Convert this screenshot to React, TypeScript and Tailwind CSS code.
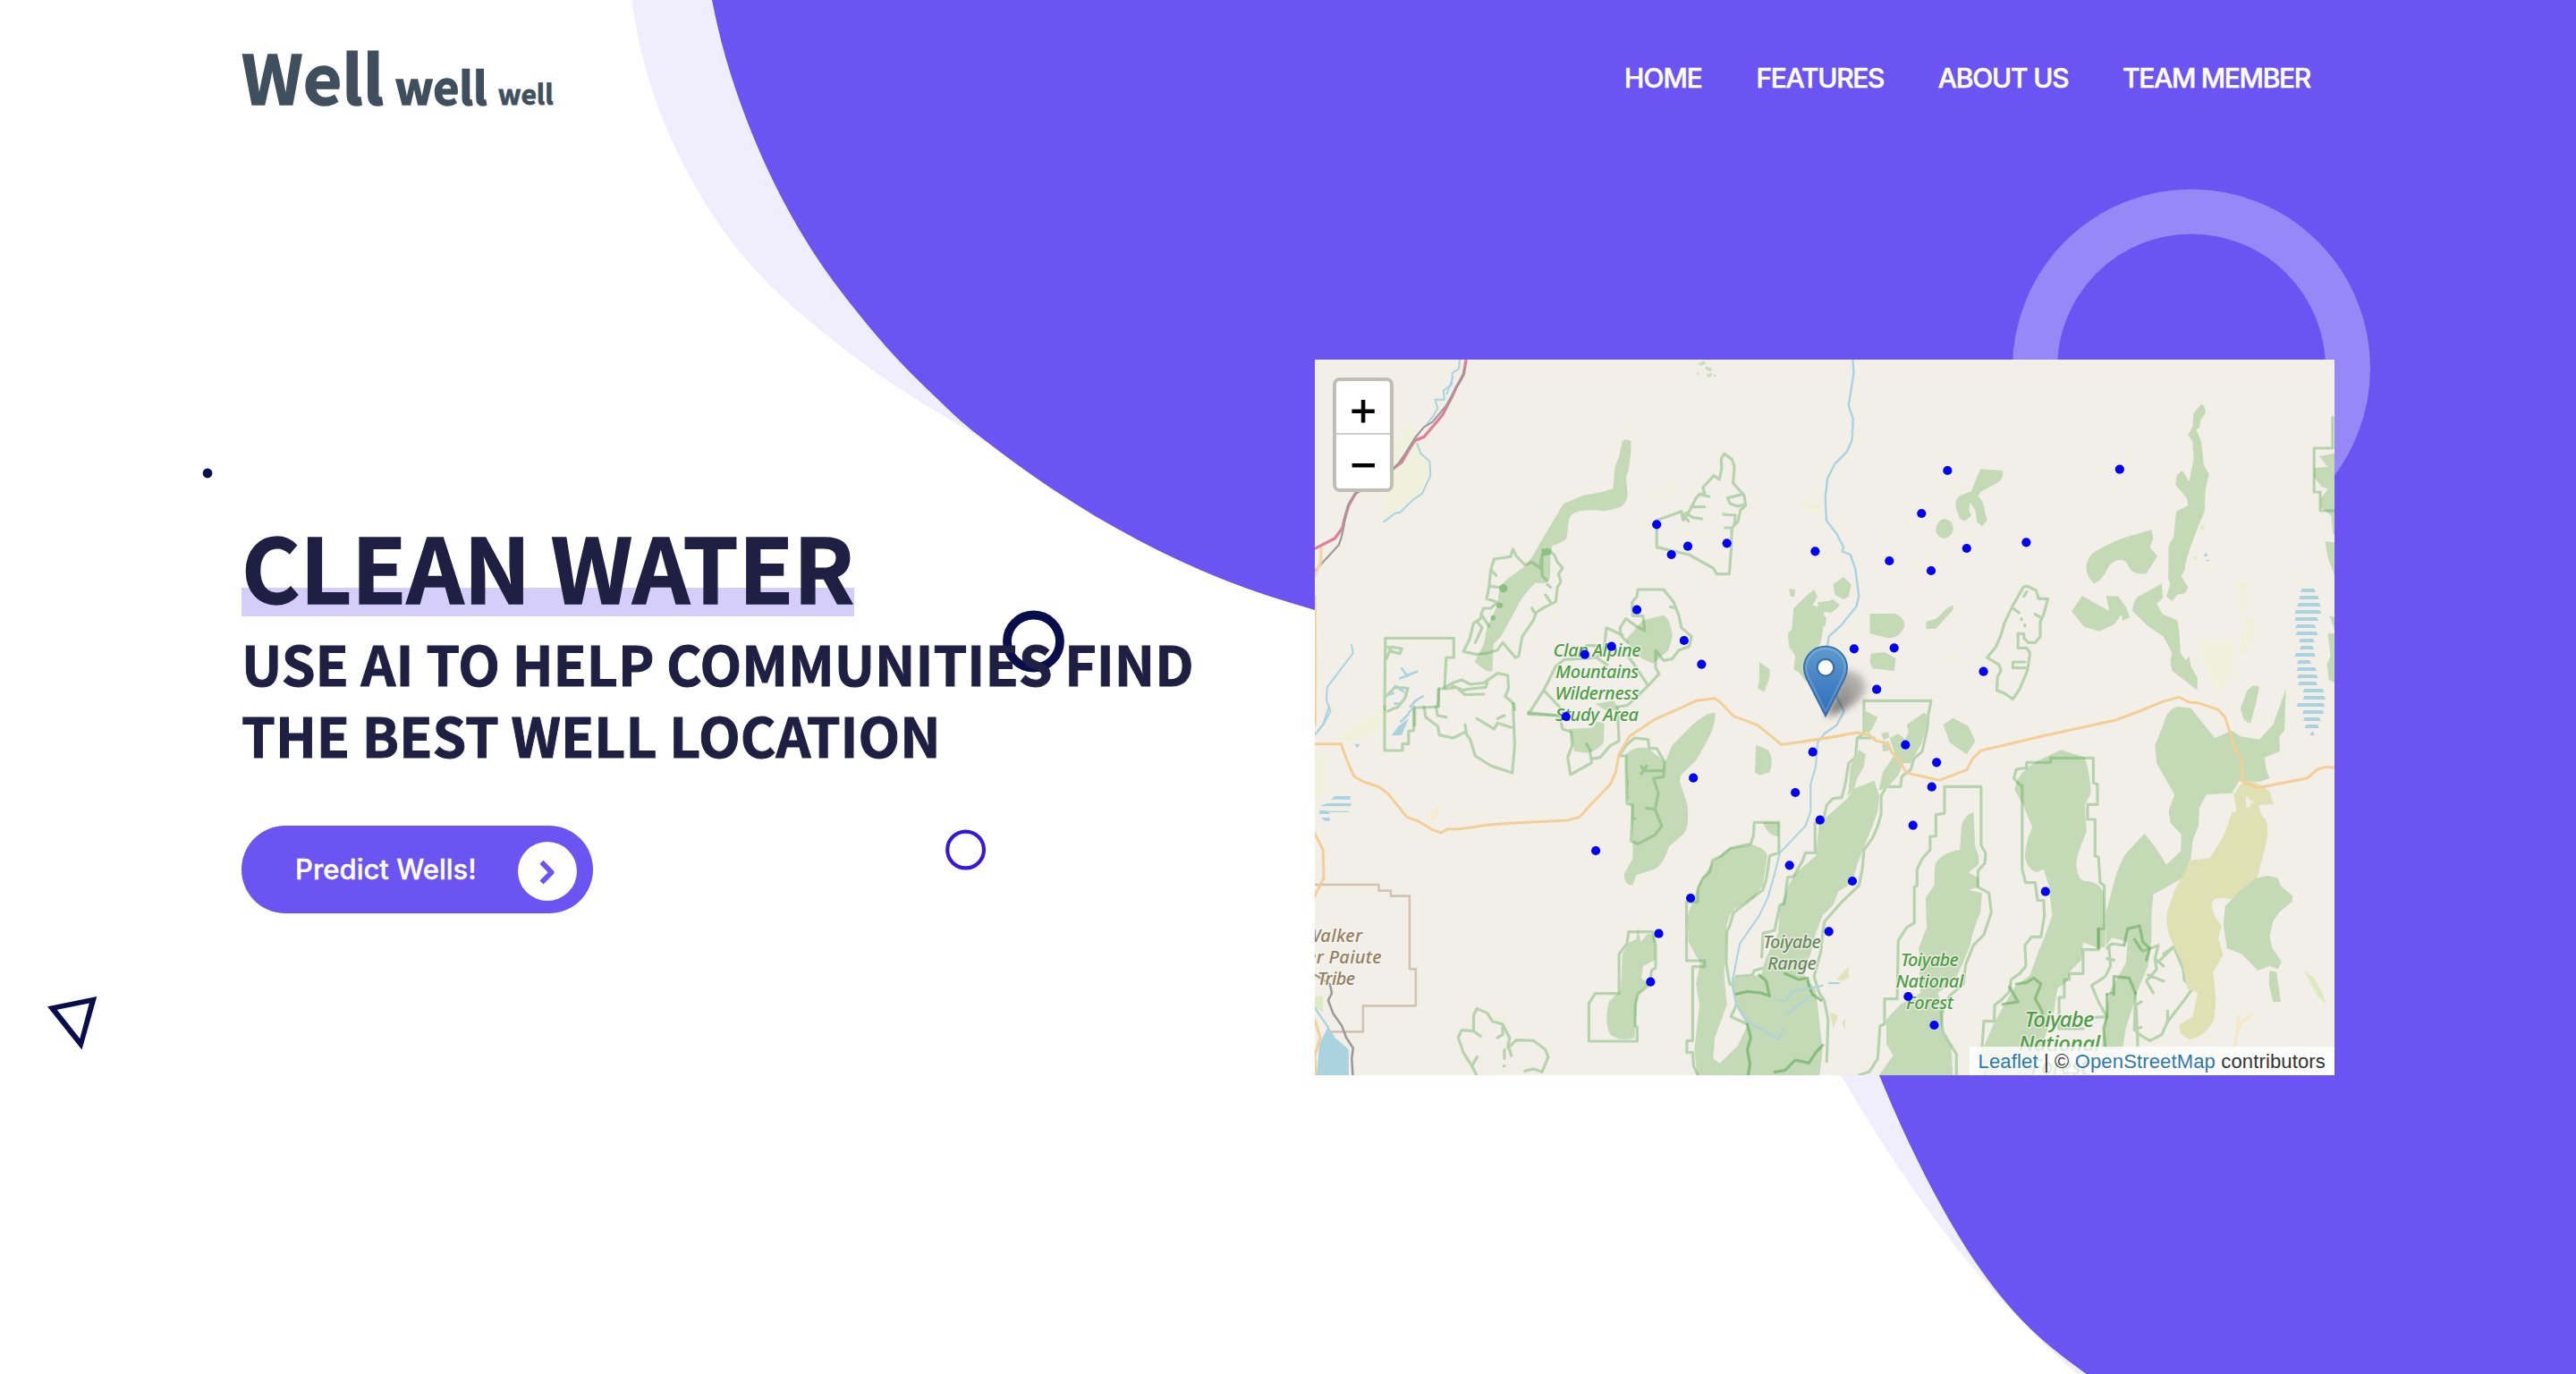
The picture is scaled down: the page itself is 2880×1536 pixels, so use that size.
import React from "react";

type Pt = [number, number];

/* Smooth curve through a list of points (Catmull-Rom as cubic segments). */
function curve(p: Pt[]): string {
  let d = `M${p[0][0]} ${p[0][1]}`;
  for (let i = 0; i < p.length - 1; i++) {
    const a = p[i - 1] || p[i];
    const b = p[i];
    const c = p[i + 1];
    const e = p[i + 2] || c;
    d += ` C${b[0] + (c[0] - a[0]) / 6} ${b[1] + (c[1] - a[1]) / 6} ${c[0] - (e[0] - b[0]) / 6} ${c[1] - (e[1] - b[1]) / 6} ${c[0]} ${c[1]}`;
  }
  return d;
}

const topEdge: Pt[] = [[786, -65], [796, 0], [811.5, 65], [832.5, 128], [858, 189], [888, 247], [922, 301], [960, 351], [1001, 399], [1046, 444], [1093, 486], [1180, 549], [1271, 603], [1368, 648], [1470, 682], [1575, 708]];
const topPale: Pt[] = [[698, -65], [706, 0], [718.5, 64], [738.5, 127], [768, 191], [806, 254], [856, 314], [922, 373], [1002, 432], [1100, 492]];
const lowEdge: Pt[] = [[2070, 1125], [2101, 1202], [2134, 1277], [2172.500, 1352], [2217, 1423], [2269.500, 1485], [2332.500, 1536], [2400, 1580]];
const lowPale: Pt[] = [[2012, 1122], [2058, 1202], [2106, 1280], [2155, 1352], [2204, 1415], [2262, 1478], [2322, 1536], [2385, 1585]];

function Backdrop() {
  return (
    <svg className="absolute inset-0 -z-10" width="2880" height="1536" viewBox="0 0 2880 1536" fill="none">
      <path fill="#F0EEFD" d={curve(topPale) + " L1100 -65 Z"} />
      <path fill="#F0EEFD" d={curve(lowPale) + " V1122 Z"} />
      <path fill="#6B54F1" d={curve(topEdge) + " L2070 1125" + curve(lowEdge).replace(/^M\S+ \S+/, "") + " L2880 1580 V-65 Z"} />
      <circle cx="2450" cy="411.5" r="175" stroke="#9887F6" strokeWidth="50" />
      <circle cx="1155.5" cy="717" r="29.5" stroke="#080E4B" strokeWidth="9.8" />
      <circle cx="1079.6" cy="950" r="20.4" stroke="#3518DC" strokeWidth="4.2" />
      <circle cx="232" cy="529" r="5.4" fill="#080E4B" />
      <path fill="#080E4B" fillRule="evenodd" d="M53 1125.3 L108.3 1114 L91.5 1173.5 Z M63.8 1128.8 L89.3 1161 L99.8 1121.6 Z" />
    </svg>
  );
}

const wood = "#C4D9B6";
const water = "#AAD3DF";
const sand = "#F0F1DC";

/* The map is kept as four sheets; each sheet has its own drawing units. */
const sheets = {
  nw: "translate(-10 -12) scale(.382653 .333333)",
  ne: "translate(570 -12) scale(.382653 .333333)",
  sw: "translate(-10 388) scale(.382653 .333333)",
  se: "translate(570 388) scale(.382653 .333333)",
};
const origin = { nw: [-10, -12], ne: [570, -12], sw: [-10, 388], se: [570, 388] };

const wells: Record<keyof typeof sheets, Pt[]> = {
  nw: [[1025, 589], [1116, 662], [1068, 690], [1230, 652], [1488, 679], [967, 875], [893, 998], [815, 1025], [1105, 978], [1156, 1058], [760, 1233]],
  ne: [[359, 408], [862, 404], [283, 552], [589, 649], [415, 669], [189, 711], [311, 744], [86, 1006], [203, 1003], [152, 1142], [464, 1082]],
  sw: [[1481, 152], [1132, 239], [1430, 288], [1502, 380], [847, 483], [1413, 532], [1124, 642], [1031, 761], [1007, 923], [1528, 754]],
  se: [[236, 128], [327, 187], [313, 269], [258, 398], [81, 585], [645, 620], [244, 972], [320, 1068]],
};

const lake: [number, number, number][] = [
  [810, 1390, 1435], [834, 1385, 1445], [858, 1380, 1450], [882, 1372, 1452], [906, 1372, 1443], [930, 1375, 1436], [954, 1376, 1442],
  [978, 1385, 1432], [1002, 1388, 1430], [1026, 1372, 1435], [1050, 1380, 1422], [1074, 1378, 1438], [1098, 1380, 1442], [1122, 1382, 1440],
  [1146, 1397, 1460], [1170, 1397, 1464], [1194, 1378, 1462], [1218, 1395, 1460], [1242, 1398, 1450], [1266, 1402, 1445], [1290, 1418, 1432],
];

function Fill({ d, c = wood }: { d: string; c?: string }) {
  return <path d={d} fill={c} />;
}
function Line({ d, c = "#5FAA55", w = 3.2, o = 0.4 }: { d: string; c?: string; w?: number; o?: number }) {
  return <path d={d} fill="none" stroke={c} strokeWidth={w} strokeOpacity={o} strokeLinejoin="round" strokeLinecap="round" vectorEffect="non-scaling-stroke" />;
}
function Label({ x, y, t, c, s = 20, w }: { x: number; y: number; t: string; c: string; s?: number; w?: number }) {
  return (
    <text x={x} y={y} fontSize={s} textAnchor="middle" textLength={w} fill={c} stroke="#F6F4EF" strokeOpacity=".7" strokeWidth="3" strokeLinejoin="round" className="font-['Noto_Sans',sans-serif] font-medium italic [paint-order:stroke]">
      {t}
    </text>
  );
}

function Terrain() {
  return (
    <svg className="absolute inset-0" width="1140" height="800" viewBox="0 0 1140 800">
      <rect width="1140" height="800" fill="#F2EFE9" />
      <g transform={sheets.nw}>
        <Fill c={sand} d="M300 245 L330 310 L335 350 L362 390 L355 440 L330 490 L280 530 L228 575 L235 500 L250 380 L262 320 Z M140 1262 L200 1220 L235 1215 L230 1262 Z M1022 478 l18 5 l-3 16 l-15 -3 Z M1058 460 l20 -2 l-3 18 l-14 -2 Z M1450 505 l50 15 l10 35 l-30 -5 l-25 -15 Z M1258 615 l17 10 l-5 25 l-14 -10 Z M72 1205 l28 15 l-10 15 l-18 -5 Z" />
        <Fill d="M925 308 Q940 300 950 310 L949 355 L942 410 L935 430 L940 490 Q935 530 905 535 Q880 548 850 541 Q800 540 785 550 Q770 560 768 575 L762 635 Q750 650 720 660 L715 690 L713 770 L700 785 L670 785 Q630 830 615 870 L570 965 L548 990 L545 1080 Q530 1085 520 1075 L493 1050 L520 990 L530 930 L560 860 L565 800 Q580 775 640 730 L665 690 L700 620 L752 520 L815 490 Q860 485 898 468 L902 400 L915 360 Z" />
        <Fill d="M985 910 L1045 893 Q1065 905 1071 965 L1060 1010 L1015 1055 L985 1040 L960 1020 L935 975 Z M845 1190 L900 1180 L915 1210 L880 1215 Z" />
        <Fill d="M1485 808 L1495 830 L1480 860 L1515 870 L1510 950 L1505 980 L1480 1050 L1460 1115 L1440 1085 L1425 1075 L1430 1030 L1412 1000 L1408 955 L1420 940 L1425 870 L1465 825 Z M1495 850 L1530 845 L1558 855 L1540 880 L1500 878 Z M1412 803 l18 5 l-3 25 l-12 -5 Z M1325 1050 L1355 1075 L1355 1100 L1340 1150 L1320 1140 L1325 1110 Z" />
        <g fill="#CBDDC0"><path d="M1145 50 l18 -12 l5 12 l-15 8 Z M1168 58 l20 8 l-6 10 l-14 -6 Z M1140 78 l10 4 l-4 8 Z M1172 84 l16 -4 l-4 14 l-12 0 Z M1190 84 l10 8 l-8 2 Z" /></g>
        <Line d="M605 672 L598 697 L550 705 L540 740 L535 800 L528 838 L560 850 L540 870 L518 870 L510 905 L490 920 L478 975 L460 1015 L500 1025 L530 1020 L560 1010 L575 985 L612 1035 L622 1030 L632 965 L665 910 L672 885 L695 868 L730 848 L735 800 L745 780 L738 755 L750 735 L735 715 L725 690 L705 672 L690 690 L685 720 L690 740 L660 715 L640 725 L615 695 Z M540 740 L556 760 M535 795 L565 800 M690 690 L690 760 L705 778 M500 915 L515 935 L505 960 L495 985 M512 890 L535 930 M660 870 L672 890 M705 790 L715 800 M700 825 L715 850" />
        <g fill="#8DBF80"><ellipse cx="577" cy="803" rx="12" ry="14" /><ellipse cx="566" cy="860" rx="10" ry="9" /><ellipse cx="547" cy="902" rx="7" ry="9" /><path d="M688 670 L718 672 L714 690 L690 695 Z" /></g>
        <Line d="M1025 575 L1097 545 L1102 575 L1120 545 L1140 500 L1150 488 L1165 485 L1160 465 L1192 425 L1208 438 L1215 400 L1213 370 L1222 352 L1245 370 L1252 395 L1248 450 L1280 490 L1285 525 L1270 540 L1262 580 L1245 600 L1242 680 L1237 755 L1200 755 L1190 735 L1150 710 L1120 690 L1080 680 L1025 665 Z M1102 555 L1118 578 M1110 550 L1130 565 L1157 570 M1125 530 L1165 530 M1150 488 L1178 495 M1275 488 L1232 500 L1240 520 L1262 528 L1280 522 M1220 555 L1255 558 L1252 590 M1225 600 h12" />
        <Line d="M970 807 L1045 807 L1075 850 L1090 895 L1097 935 L1127 965 L1120 998 L1090 1010 L1070 1040 L1045 1045 L1022 1012 L1022 1070 L1032 1090 L1000 1130 L940 1195 L915 1200 M970 807 L967 830 L953 850 L955 895 L985 895 L990 945 L965 930 L935 905 L918 935 L920 960 L940 985 M925 960 L878 935 L872 1000 L850 1035 L755 1042 L730 1065 L695 1145 L650 1225 L740 1230 M1065 865 L1080 870 M695 1145 L740 1200 L760 1233 M940 1030 L960 1060 L1000 1130 M855 1040 L880 1060 M820 995 L850 995" />
        <Line d="M318 1262 L318 1203 L345 1203 L385 1200 L388 1140 L405 1140 L410 1035 L432 1035 L432 970 L232 970 L230 1210 M235 1040 L250 1000 L280 1005 L275 1022 L250 1015 L240 1000 M230 1170 L260 1135 L298 1138 L290 1170 L270 1200 L240 1215" />
        <Line d="M388 1200 V1140 M405 1135 L430 1120 L455 1110 L480 1125 L520 1120 L560 1088 L590 1095 L592 1140 L582 1165 L608 1190 L610 1210 M410 1140 L440 1135 L465 1160 L520 1158 M425 1128 L460 1145 L480 1140 L525 1135 L530 1120" />
        <Line c={water} o={1} w={2} d="M450 36 L447 68 L428 80 L426 120 L402 140 L405 170 L378 170 L385 200 L372 225 L355 250 M430 95 L412 150 M325 318 L335 350 L362 378 L364 425 L340 485 L315 505 L275 548 L260 552 L228 580 M133 992 L138 1020 L105 1070 L62 1135 L60 1180 L72 1215 L50 1262" />
        <Line c={water} o={1} w={2.6} d="M280 1072 L295 1095 L325 1082 M275 1105 L300 1095 M262 1130 L285 1150 M240 1160 L255 1155 M260 1190 h15 M305 1200 L320 1180 L342 1165 M278 1250 L300 1225" />
        <Line c="#E0809A" o={1} w={3.4} d="M468 36 L461 85 L438 132 L425 165 L400 220 L375 255 L345 295 L318 308 L300 340 L280 380 L248 408 L165 470 L145 485 L125 525 L113 570 L107 600 L85 635 L26 670" />
        <Line c="#9B9B9B" o={1} w={2.2} d="M465 60 L458 92 L410 190 L370 245 L345 262 L318 300 L290 352 L270 385 L248 410 L150 475 L125 520 L118 545 L110 600 L103 635 L96 658 L26 745" />
        <Line c="#F5D3A2" o={1} d="M45 670 L43 715 L26 760 M27 830 L28 1100 L26 1262" />
      </g>
      <g transform={sheets.ne}>
        <Fill c={sand} d="M1090 985 L1195 975 L1190 1090 L1150 1175 L1130 1100 Z M1205 780 h30 v60 l-15 50 l-12 -50 Z M1230 900 h30 l-10 80 l-25 50 l-12 -10 Z M1395 785 h20 l5 15 h-25 Z M350 1035 l25 -18 l18 10 l-20 10 Z" />
        <Fill c="#E3EBC4" d="M1100 590 l13 5 l-8 14 l-8 -5 Z M1080 697 h8 v12 h-8 Z" />
        <Fill d="M55 765 L78 790 L70 830 L55 840 L30 825 L25 790 Z M0 850 L25 840 L45 860 L20 885 L-15 880 Z M-12 890 L5 900 L2 930 L-12 925 Z" />
        <Fill d="M455 403 L520 408 Q525 440 500 452 L455 480 L448 495 Q465 510 468 545 L475 575 L460 595 L445 580 L440 540 L425 515 L422 540 L428 560 L410 578 L395 570 L383 530 Q380 500 400 490 L428 478 Z M350 570 Q375 575 376 605 Q370 635 345 635 Q325 630 325 605 Q328 572 350 570 Z" />
        <Fill d="M955 607 L960 635 L950 665 L972 695 L940 753 Q905 760 890 735 Q885 710 865 707 Q840 710 830 730 Q810 780 787 787 Q765 765 764 730 Q770 690 790 680 Q850 640 900 625 Z" />
        <Fill d="M1100 185 Q1115 195 1112 215 L1098 240 L1095 265 L1085 270 L1100 310 L1108 390 L1123 420 L1112 475 L1110 545 L1090 600 L1070 660 L1055 715 L1052 740 L1042 762 L1062 800 L1052 820 L1030 825 L1015 846 L998 830 L1010 790 L1004 770 L1005 660 L1020 630 L1027 545 L1062 525 L1058 500 L1025 455 L1028 425 L1045 408 L1065 445 L1078 370 L1075 310 L1062 290 L1075 260 L1078 215 Z" />
        <Fill d="M985 787 L988 835 L970 855 L988 890 L1030 910 L1035 940 L1040 1020 L1055 1045 L1065 1030 L1070 1065 L1090 1105 L1088 1145 L1050 1110 L1015 1080 L1010 1045 L1015 1020 L990 965 L945 930 L900 880 Q898 850 915 832 Z M752 828 L832 880 L822 828 L858 830 L880 865 L892 900 L870 912 L868 890 L845 925 L803 947 L758 932 L722 880 Z" />
        <Fill d="M132 888 L205 888 Q235 900 233 930 Q220 970 185 970 L132 955 Z M376 860 L375 875 L325 938 L297 940 L296 915 L325 905 L360 868 Z M135 1022 L175 1017 L208 1038 L203 1080 L140 1072 L132 1050 Z M1250 1130 L1270 1132 L1262 1180 L1245 1255 L1225 1245 L1215 1205 L1235 1145 Z" />
        <Fill d="M1490 350 L1445 360 L1470 395 L1430 400 L1430 430 L1450 460 L1470 470 L1450 500 L1450 530 L1480 560 L1485 620 L1490 620 Z M1462 645 L1490 650 L1490 760 L1470 700 Z M1475 895 L1490 900 V945 Z M1470 955 H1490 V1120 L1473 1110 L1468 1060 L1478 1030 Z" />
        <Line d="M1484 230 L1484 333 L1430 333 L1430 480 L1448 480 L1448 543 L1490 543" />
        <Line d="M590 795 L618 810 L625 838 L652 838 L640 890 L630 915 L630 965 L615 985 L595 985 L582 970 L582 955 L565 955 L565 1003 L590 1003 L600 1020 L595 1060 L592 1080 L570 1140 L550 1175 L525 1155 L503 1145 L505 1100 L515 1080 L510 1060 L475 1035 L500 1000 L515 960 L525 920 L550 860 L580 800 Z M550 870 L568 885 M585 1070 L550 1070 V1050 H585 M582 830 L590 815 M615 890 L630 900 M575 905 v4 M585 925 v4" />
        <Line c={water} o={1} w={2.4} d="M82 36 L85 80 L70 190 L83 235 L80 305 L65 345 L30 385 L8 435 L2 500 L5 575 L35 620 L55 665 L52 680 L75 690 L90 740 L100 830 L92 865 L50 925 L12 965 L8 1000 L38 1175 L55 1210 L55 1220 L35 1262 L0 1290" />
        <g fill={water}>
          {lake.map(([y, a, b]) => (
            <path key={y} d={`M${a + 5} ${y - 6} H${b - 5} L${b} ${y + 6} H${a} Z`} />
          ))}
          <path d="M1105 695 l10 -12 l5 12 Z M1112 708 h12 l-4 6 Z" />
        </g>
      </g>
      <g transform={sheets.sw}>
        <Fill c={sand} d="M75 105 L160 50 L230 0 L215 80 L120 125 Z M26 140 L60 180 L65 270 L26 330 Z M545 1035 h42 v22 h-35 Z" />
        <Fill c="#F6EBD2" d="M398 330 L378 380 L362 382 L365 350 Z" />
        <Fill d="M935 160 Q960 130 1000 140 L1050 185 L1070 130 L1130 60 Q1170 20 1195 20 Q1200 60 1165 130 L1140 180 L1095 230 L1092 250 L1115 330 Q1120 400 1105 425 L1060 470 Q1050 520 1020 545 L965 565 L955 598 Q930 600 930 560 L955 510 L955 460 L950 330 L938 310 Z M1315 128 L1350 145 Q1370 180 1355 220 L1325 230 L1312 220 Z" />
        <Fill d="M1235 475 L1300 462 Q1345 475 1348 500 L1335 600 L1310 640 L1250 680 Q1225 720 1228 760 L1222 900 L1230 1000 L1195 1110 L1190 1180 L1210 1197 L1240 1250 L1145 1250 L1135 1150 L1150 1000 L1140 930 L1152 860 L1118 790 L1115 700 L1135 640 L1150 590 L1190 520 Z M1335 388 H1382 V435 Q1350 435 1335 388 Z" />
        <Fill d="M970 743 L978 790 L1000 760 L1020 770 L1020 850 L985 870 L980 910 L1000 930 L970 965 L965 1040 L960 1110 Q920 1125 890 1100 Q870 1060 885 990 L920 950 L925 830 L945 790 L965 780 Z M770 75 L840 70 L850 50 L872 55 L870 120 Q850 150 820 155 L785 150 Z" />
        <Line d="M915 165 H935 L938 325 L955 330 L950 450 L970 460 L1020 430 L1040 400 L1020 345 L1030 290 L1015 240 L1045 235 L1048 185 L1025 140 L1003 140 L1000 110 L960 105 L935 130 Z M980 200 L990 215 L1045 215 M995 200 L980 225 M995 340 L1022 345 M938 240 v30 M955 375 h6" />
        <Line d="M943 755 H1012 L1022 800 L1022 875 L1010 885 L1005 930 L970 965 L962 1000 L962 1070 L968 1075 V1122 H827 V995 L845 962 H915 V830 L938 795 Z" />
        <Line d="M1350 840 L1340 875 L1310 885 L1305 900 L1258 905 L1250 935 L1238 930 L1228 860 L1230 755 L1238 735 L1250 690 L1295 650 L1335 615 L1345 580 L1355 500 L1382 490 V388 H1310 L1308 430 L1300 460 L1240 475 L1215 500 L1188 515 L1180 555 L1160 575 L1145 610 V655 H1112 V852 H1165 V872 H1130 V1120 H1113 V1160 H1130 L1133 1205 L1150 1250 M1250 935 L1258 1000 L1242 1040 L1290 1065" />
        <Line d="M650 20 L740 30 L750 75 L775 85 L778 130 L765 170 L773 228 L835 188 L830 150 M820 125 L832 150 M835 175 L860 170 L890 130 L915 115 L910 0" />
        <Line d="M345 0 L350 35 L385 65 L390 95 L430 105 L465 85 L480 110 L495 165 L540 198 L603 222 L610 130 L605 -10 M465 60 L470 95 M500 40 L550 75 L560 55 L600 70 M560 40 L580 30 M380 0 L385 30 L410 35 M230 0 V147 H282 V125 H300 V82 L315 80 V0" />
        <Line d="M500 1012 L530 1028 L545 1055 L575 1065 L595 1110 L590 1145 L615 1118 L665 1120 L700 1150 L708 1175 L690 1225 L665 1215 L640 1222 M500 1012 L490 1035 V1088 L455 1085 L445 1110 L460 1160 L485 1205 L505 1250 M490 1088 L510 1105 M485 1205 L500 1175 M575 1065 L575 1100 L560 1110 M590 1130 L600 1170 M580 1150 L580 1180 M578 1205 h2" />
        <Line c="#CDBFAD" o={0.9} w={2.6} d="M26 597 H213 V617 H248 V635 H303 V880 H321 V1003 H167 V1090 H75" />
        <Fill c={water} d="M65 1072 L85 1110 L125 1150 L125 1250 H30 L40 1130 Z M300 40 L280 95 L250 97 L270 65 Z M85 300 H130 V311 H72 Z M62 324 H132 V334 H40 Z M70 350 H125 V354 H66 L70 360 H40 V347 Z M45 372 H70 V383 H55 Z M142 125 h16 l-8 14 Z" />
        <Fill c="#DCEBC0" d="M26 972 H50 V1025 L26 1008 Z" />
        <Line c={water} o={1} w={2.2} d="M68 0 L50 60 L26 95 M300 20 L312 5 M26 1010 L65 1075" />
        <Line c="#9B9B9B" o={1} w={2.6} d="M28 900 L70 930 L76 960 L65 985 L80 1030 L105 1070 L118 1110 L138 1145 L134 1180 L138 1250" />
        <Line c="#F3CF97" o={1} w={3} d="M26 125 L103 125 L120 180 L140 233 L165 250 L215 270 L240 292 L295 370 L330 385 L370 413 L395 423 L415 410 L450 410 L530 397 L610 390 L700 385 L760 382 L800 370 L835 325 L890 260 L905 220 L915 160 L945 100 L1020 42 L1100 2 L1140 -20 L1195 -28 L1215 -10 L1250 32 L1320 62 L1390 127 L1450 118 L1568 97 M26 0 V50 M26 425 L50 480 L52 575 L26 635 M26 1050 L42 1110 L26 1170 L30 1250" />
      </g>
      <g transform={sheets.se}>
        <Fill d="M-16 390 L0 375 L65 310 L85 275 L145 248 L160 300 L155 350 L140 400 L115 470 L95 530 L80 590 L40 620 L25 665 L-6 700 L-26 760 L-41 830 L-66 890 L-26 950 L-16 1050 L-6 1150 L-16 1250 L-350 1250 L-306 1195 L-256 1140 L-226 1070 L-261 1000 L-266 910 L-186 900 L-166 830 L-136 760 L-131 680 L-106 600 L-86 560 L-26 500 Z" />
        <Line d="M115 -20 V90 L95 105 L90 170 L70 190 L60 260 L50 305 L24 308 L6 330 L-6 390 L-28 390 V490 H-56 L-66 520 L-91 570 L-108 572 L-118 660 L-131 665 L-146 750 L-180 760 L-184 840 M115 -20 H311 L303 25 L300 70 L285 150 L260 175 L252 210 L225 235 L222 268 H180 L165 300 L165 360 L155 400 L140 440 L115 480 L110 545 L100 600 L50 655 L0 720 L-6 760 L-11 820 L-31 905 L-16 960 L-1 985 L10 1050 L6 1190 M95 105 L145 105" />
        <Line o={0.6} d="M-226 1065 L-216 1110 L-226 1150 L-218 1200 L-226 1250 M-261 965 L-226 955 L-186 960 L-161 970 L-171 920 L-191 900 M-146 1225 L-116 1220 L-86 1185 L-46 1195 L-26 1160 L-6 1135 M-116 895 L-76 915 L-50 910 L-46 935 L-36 965 L-10 985" />
        <Fill d="M115 12 L155 35 L145 60 L130 90 L115 80 Z M100 145 L120 160 L115 200 L95 240 L85 280 L65 300 L70 280 L75 200 Z M240 60 L290 20 L302 30 L298 70 L280 130 L250 190 L230 190 L215 230 L180 275 L158 280 L170 220 L205 160 L200 140 L190 105 L215 90 L235 110 L245 85 Z M165 90 l20 -5 l5 18 l-18 8 Z M168 125 l22 -3 v25 l-20 3 Z M375 38 L420 65 L440 115 L415 160 L365 120 L347 60 Z" />
        <Fill d="M435 355 L440 470 L450 500 L450 530 L420 555 L450 575 L450 605 L420 615 L460 625 L455 690 Q430 760 425 800 L400 870 L380 920 L330 960 L350 1020 L340 1090 L370 1140 L375 1250 H150 L200 1170 L180 1130 L180 1050 L220 1000 L280 960 L275 810 L298 740 L295 640 L320 600 L322 530 Q340 490 395 480 L400 400 Q410 360 435 355 Z" />
        <Line d="M350 268 H457 V465 L470 490 L468 525 L448 550 V605 L480 625 L487 690 L465 765 L435 800 L412 865 L405 930 L365 970 L340 1025 L345 1090 L385 1165 V1250 M350 268 V358 L325 362 V435 H308 V480 L285 510 L270 545 V600 L262 605 V725 L240 740 L215 785 L212 980 H175 V1065 L162 1070 L155 1180 L130 1225 L100 1235" />
        <Fill d="M690 145 L760 170 Q775 220 778 290 L760 330 L765 420 Q735 500 735 530 Q740 590 770 585 Q800 590 815 620 L820 740 L820 805 L800 810 L755 790 L750 850 L715 890 L710 920 L680 945 L670 1020 L640 1120 L610 1250 L470 1250 L465 1140 L495 1060 L555 940 L600 900 L625 820 L640 780 L665 700 L655 600 L640 545 L620 555 Q590 545 585 500 Q590 440 607 405 L580 330 L555 280 Q560 220 625 180 Z" />
        <Fill d="M1035 0 L1070 5 L1140 105 L1190 80 L1215 100 L1270 110 L1310 60 L1348 -60 L1343 80 L1328 100 L1330 150 L1285 170 L1290 210 L1300 240 L1270 252 L1210 250 L1190 290 L1115 295 L1095 340 L1092 400 L1075 450 L1070 510 L1045 575 L960 630 L955 700 L955 780 L945 870 L915 950 L880 1080 L870 1150 H810 L820 1040 L835 950 L880 860 L885 790 L840 775 L822 800 L822 690 L850 570 Q870 500 890 480 L935 425 Q980 490 998 530 L1040 485 L1043 430 L1010 390 L1005 350 L1022 295 L970 190 L965 130 L990 60 Q1000 5 1035 0 Z M1215 5 L1230 -10 L1250 0 L1245 50 L1235 55 Z" />
        <Line d="M660 172 H785 V255 L797 260 V328 H768 V378 H790 V500 L800 505 L805 590 L817 600 V745 H800 V815 H755 V895 H715 V915 H700 V975 H685 V1080 H755 M660 172 V187 H590 V205 L560 210 L553 240 L570 262 L577 265 V545 L587 590 H615 L622 650 H640 L642 700 L632 772 H605 L585 800 L588 870 L570 895 L545 915 L540 955 L515 985 L497 1000 L495 1055 H465 L460 1140 L470 1250" />
        <Line o={0.55} d="M560 930 L590 925 L610 910 L632 930 L615 980 L635 1020 L640 1070 M540 940 L565 990 L520 998 M875 800 L885 745 L920 735 L930 790 L950 810 L940 850 M905 780 L925 815 M845 965 V905 L890 910 L908 960 M825 965 V1040 L815 1080 L820 1140 M800 810 V745" />
        <Line d="M930 820 L975 800 L965 845 L990 870 M1020 805 L980 850 M990 830 L1020 805 L1048 880 L1050 915 L1075 945 L1050 985 L1000 1060 L985 1100 L950 1120 L920 1100 L905 1080 L908 960 M840 960 L825 965 M830 800 L835 870 L820 905 L780 935 L800 990 L825 1040 L790 1042 M825 845 L845 850 M965 845 L970 880 L940 920 L960 960 M945 900 L990 920 M925 990 L910 1000 L915 1140 M870 800 L840 795 L825 810 M1002 1020 V1060 M905 1085 L925 1075" />
        <Fill c="#DFE1B5" d="M1240 247 L1275 262 L1300 285 L1312 328 L1270 330 Q1268 355 1290 380 Q1300 420 1285 480 L1265 570 L1190 645 L1135 650 Q1130 690 1160 735 L1150 780 L1165 830 L1135 890 L1143 980 L1138 1050 Q1110 1110 1065 1115 Q1030 1100 1038 1065 L1075 1040 L1090 960 L1060 945 L1045 860 L1020 800 Q995 750 1000 690 L1025 610 L1070 515 L1125 508 Q1160 450 1170 420 L1190 355 L1203 350 L1195 295 L1215 260 Z" />
        <Fill c="#F2EFE9" d="M1190 647 Q1125 628 1132 670 Q1134 700 1160 735 L1175 690 Z" />
        <Fill c="#EEEFD8" d="M1230 300 h8 v8 h6 v8 h10 v8 h-10 v14 h-12 Z" />
        <Fill d="M1295 567 L1325 575 L1332 600 L1368 635 L1365 655 L1328 690 L1310 720 L1300 770 L1308 810 L1335 855 L1325 880 L1300 870 L1265 885 L1220 830 L1175 810 L1165 730 L1170 670 L1210 620 L1260 575 Z M1300 885 L1320 890 L1333 990 L1310 990 L1298 930 Z" />
        <Fill c="#DAEBC0" d="M1400 885 L1430 910 L1450 950 L1467 1000 L1440 970 Z" />
        <Fill c="#DFE3BE" d="M70 870 V910 L50 920 L35 915 Z M15 1025 L40 1035 L25 1080 L20 1050 Z M60 1045 V1085 L50 1060 Z" />
        <Line c={water} o={1} w={2} d="M-141 985 L-111 985 L-96 955 L-46 945 L-6 935 M-106 1030 L-46 970 M12 927 H42 M0 90 L-21 120 L-26 200 L-41 260 L-41 350 L-56 400 L-131 490 L-146 560 L-166 640 L-191 700 L-248 795 L-271 930 L-258 1000 L-226 1055 L-136 1115 L-121 1080" />
        <Line c="#F3CF97" o={1} w={3} d="M-66 118 L52 95 L95 87 L130 95 L150 115 L185 122 L195 150 L220 185 L240 222 L335 247 L415 212 L432 175 L455 148 L650 95 L850 45 L920 15 L990 -18 L1035 -32 L1065 -15 L1090 -13 L1150 10 L1170 35 L1185 90 L1195 130 L1220 185 L1220 250 L1265 272 L1410 240 L1440 210 L1465 202 L1490 205" />
        <Line c="#F6E7C6" o={1} d="M1198 1140 L1205 1090 L1215 1060 L1243 1037 M1205 1090 L1210 1040" />
      </g>

      <Label x={315.6} y={332} t="Clan Alpine" c="#4F9D48" w={98} />
      <Label x={315.6} y={356} t="Mountains" c="#4F9D48" w={93} />
      <Label x={315.6} y={380} t="Wilderness" c="#4F9D48" w={94} />
      <Label x={315.6} y={403.5} t="Study Area" c="#4F9D48" w={93} />
      <Label x={21} y={651} t="Walker" c="#93805F" w={64} />
      <Label x={19} y={675} t="River Paiute" c="#93805F" w={111} />
      <Label x={24} y={699} t="Tribe" c="#93805F" w={42} />
      <Label x={533.4} y={657.5} t="Toiyabe" c="#6C8A60" w={65} />
      <Label x={533.4} y={681.5} t="Range" c="#6C8A60" w={55} />
      <Label x={687.4} y={677.5} t="Toiyabe" c="#4F9D48" w={65} />
      <Label x={687.4} y={701.5} t="National" c="#4F9D48" w={76} />
      <Label x={687.4} y={725.5} t="Forest" c="#4F9D48" w={53} />
      <Label x={832.5} y={745.5} t="Toiyabe" c="#4F9D48" s={24} w={78} />
      <Label x={832.5} y={773} t="National" c="#4F9D48" s={24} w={91} />
      <Label x={832.5} y={799} t="Forest" c="#4F9D48" s={24} w={64} />

      <g fill="#0000F5">
        {(Object.keys(wells) as (keyof typeof sheets)[]).map((k) =>
          wells[k].map(([x, y]) => <circle key={`${k}${x}`} cx={x * 0.382653 + origin[k][0]} cy={y / 3 + origin[k][1]} r="5.1" />),
        )}
      </g>
      <Marker />
    </svg>
  );
}

function Marker() {
  return (
    <g transform="translate(0 -.8)">
      <defs>
        <linearGradient id="pin" x1="0" y1="0" x2="0" y2="1">
          <stop offset="0" stopColor="#5F9BCF" />
          <stop offset="1" stopColor="#2E6BBB" />
        </linearGradient>
        <linearGradient id="fade" x1="0" y1="1" x2="1" y2="0">
          <stop offset="0" stopColor="#000" stopOpacity=".55" />
          <stop offset="1" stopColor="#000" stopOpacity=".16" />
        </linearGradient>
        <filter id="soft" x="-50%" y="-50%" width="200%" height="200%">
          <feGaussianBlur stdDeviation="4.5" />
        </filter>
      </defs>
      <path d="M572 400 L582 372 L588 350 C600 346 614 352 616 364 C616 378 600 392 572 400 Z" fill="url(#fade)" filter="url(#soft)" />
      <path d="M571 399.500 L550 358 C547.500 353 546.800 349 546.800 345.500 A24.200 24.200 0 0 1 595.200 345.500 C595.200 349 594.500 353 592 358 Z" fill="url(#pin)" stroke="#38709F" strokeWidth="1.700" />
      <path d="M571 394 L552.500 357 C550 352 549.300 349 549.300 345.500 A21.700 21.700 0 0 1 592.700 345.500 C592.700 349 592 352 589.500 357 Z" fill="none" stroke="#fff" strokeOpacity=".18" strokeWidth="2" />
      <circle cx="571" cy="345" r="9.300" fill="#fff" stroke="#38709F" strokeWidth="2.200" />
    </g>
  );
}

function MapPanel() {
  return (
    <section className="relative h-[800px] w-[1140px] shrink-0 overflow-hidden bg-[#F2EFE9]">
      <Terrain />
      <div className="absolute top-5 left-5 flex w-[68px] flex-col overflow-hidden rounded-lg border-4 border-[#C1BEB8] bg-white font-['Liberation_Sans',sans-serif] text-[50px] text-black [-webkit-text-stroke:1px_black]">
        <button className="flex h-[60px] items-center justify-center border-b-2 border-[#CCC] pt-2 leading-none">+</button>
        <button className="flex h-[60px] items-center justify-center pt-2 leading-none">−</button>
      </div>
      <div className="absolute right-0 bottom-0 flex h-8 items-center bg-white/80 px-2.5 font-['Liberation_Sans',sans-serif] text-[22px] tracking-[0.15px] whitespace-pre text-[#333]">
        <a className="text-[#3078A8]">Leaflet</a> | © <a className="text-[#3078A8]">OpenStreetMap</a> contributors
      </div>
    </section>
  );
}

export default function App() {
  return (
    <div className="relative isolate h-[1536px] w-[2880px] overflow-hidden bg-white">
      <Backdrop />
      <header className="flex h-[124px] items-start justify-between pt-[45px] pr-[297px] pl-[270px]">
        <div className="flex items-baseline gap-3 font-['Noto_Sans_CJK_SC',sans-serif] leading-[80px] font-bold text-[#404F5E] [-webkit-text-stroke:1.4px_#404F5E]">
          <span className="text-[75px] leading-[80px]">Well</span>
          <span className="text-[50px] leading-none">well</span>
          <span className="text-[30px] leading-none [-webkit-text-stroke:0.8px_#404F5E]">well</span>
        </div>
        <nav className="mt-[22px] flex gap-[60.5px] font-['Inter',sans-serif] text-[30px] leading-10 font-medium text-white [-webkit-text-stroke:0.5px_white]">
          <a className="tracking-[-1px]">HOME</a>
          <a className="tracking-[-1.3px]">FEATURES</a>
          <a className="tracking-[-1.2px]">ABOUT US</a>
          <a className="tracking-[-1.3px]">TEAM MEMBER</a>
        </nav>
      </header>
      <main className="flex items-start justify-between pt-[278px] pr-[270px] pl-[270px]">
        <div className="mt-[180px] flex flex-col items-start">
          <h1 className="h-[107px] bg-[linear-gradient(#D5CEFB,#D5CEFB)] bg-[length:100%_32px] bg-bottom bg-no-repeat font-['Noto_Sans_CJK_SC',sans-serif] text-[100px] leading-[99px] font-bold tracking-[-0.15px] whitespace-nowrap text-[#1E1F43] [-webkit-text-stroke:1.4px_#1E1F43]">
            CLEAN WATER
          </h1>
          <h2 className="mt-3 font-['Noto_Sans_CJK_SC',sans-serif] text-[60.65px] leading-[80px] font-bold whitespace-nowrap text-[#1E1F43] [-webkit-text-stroke:1px_#1E1F43]">
            USE AI TO HELP COMMUNITIES FIND
            <br />
            THE BEST WELL LOCATION
          </h2>
          <button className="mt-[62px] flex h-[98px] w-[393px] items-center justify-between rounded-full bg-[#6B54F1] pr-[18px] pl-[60px] text-white">
            <span className="font-['Inter',sans-serif] text-[31px] font-medium [-webkit-text-stroke:0.4px_white]">Predict Wells!</span>
            <span className="mt-1 flex size-[66px] items-center justify-center rounded-full bg-white">
              <svg width="18" height="28" viewBox="0 0 18 28" fill="none" stroke="#6B54F1" strokeWidth="5.8" strokeLinejoin="round" className="-ml-px mt-0.5">
                <path d="M2.500 2.800 L13.600 14.200 L2.500 25.600" />
              </svg>
            </span>
          </button>
        </div>
        <MapPanel />
      </main>
    </div>
  );
}
